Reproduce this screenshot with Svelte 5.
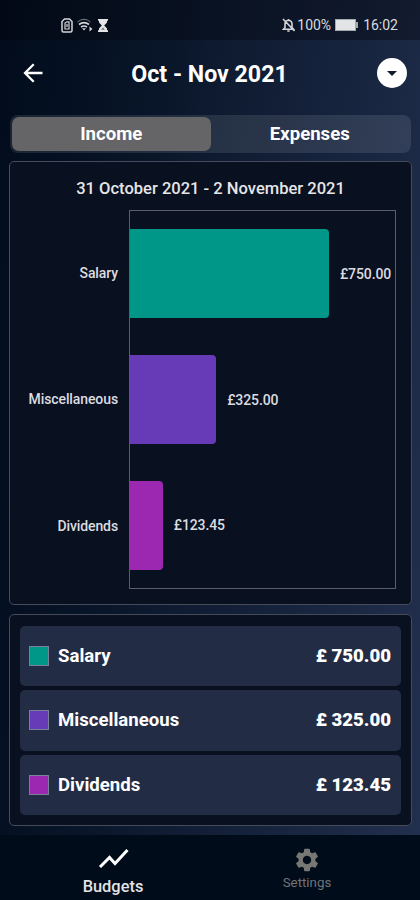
<script>
	const currency = '£';
	const scale = 0.2653;

	const items = [
		{ name: 'Salary', amount: 750, color: '#009688' },
		{ name: 'Miscellaneous', amount: 325, color: '#673ab7' },
		{ name: 'Dividends', amount: 123.45, color: '#9c27b0' }
	];

	const tabs = ['Income', 'Expenses'];
	let active = 'Income';
</script>

<div class="app">
	<div class="status">
		<div class="left">
			<svg width="12" height="15" viewBox="0 0 12 15" fill="none" stroke="#d2d4d8" stroke-width="1.5">
				<path d="M3.5 1h5L11 3.500V12.500Q11 14 9.500 14H2.500Q1 14 1 12.500V3.500Z" />
				<path d="M4 11V5l2-1.200h2V11ZM6 6v3" stroke-width="1.200" />
			</svg>
			<svg class="wifi" width="16" height="14" viewBox="0 0 16 14" fill="none" stroke="#d2d4d8">
				<path d="M.5 4Q7 -1.500 13.500 4" stroke="#777d86" />
				<path d="M2 6.500Q7 2.800 12 6.500M4 9Q7 7 10 9" stroke-width="1.600" />
				<path d="M5 10.200h4L7 12.500z" fill="#d2d4d8" stroke="none" />
				<path d="M12.500 8.500l3 2.500-3 2.500z" fill="#d2d4d8" stroke="none" />
			</svg>
			<svg width="12" height="15" viewBox="0 0 12 15" fill="#e4e5e7">
				<path d="M1 1h10v1.800H10V4.500L7.200 7.500 10 10.500v1.700h1V14H1v-1.800h1v-1.700L4.800 7.500 2 4.500V2.800H1z" />
				<path d="M6 9.500l2 2.200H4z" fill="#69707a" />
			</svg>
		</div>
		<div class="right">
			<svg width="13" height="14" viewBox="0 0 13 14" fill="none" stroke="#d2d4d8" stroke-width="1.600">
				<path d="M1.500 11.200h10L10 9.500V6q0-3.200-3.500-3.700Q3 2.800 3 6v3.500zM6.500 1v1.300M5.300 13h2.400M1 1l11.500 12" />
			</svg>
			<span>100%</span>
			<div class="battery"></div>
			<span>16:02</span>
		</div>
	</div>

	<header>
		<svg width="20" height="20" viewBox="0 0 20 20" fill="none" stroke="#fff" stroke-width="2.300">
			<path d="M19.500 10H2M10.700 1.200L2 10l8.700 8.800" />
		</svg>
		<h1>Oct - Nov 2021</h1>
		<button class="picker" aria-label="Select period">
			<svg width="10" height="5" viewBox="0 0 10 5"><path d="M0 0h10L5 5z" fill="#111b2c" /></svg>
		</button>
	</header>

	<div class="tabs">
		{#each tabs as tab}
			<button class:active={active === tab} on:click={() => (active = tab)}>{tab}</button>
		{/each}
	</div>

	<section class="panel chart">
		<h2>31 October 2021 - 2 November 2021</h2>
		<div class="graph">
			<div class="labels">
				{#each items as item}
					<span>{item.name}</span>
				{/each}
			</div>
			<div class="plot">
				{#each items as item}
					<div class="row">
						<div class="bar" style="width: {item.amount * scale}px; background: {item.color}"></div>
						<span>{currency}{item.amount.toFixed(2)}</span>
					</div>
				{/each}
			</div>
		</div>
	</section>

	<section class="panel list">
		{#each items as item}
			<div class="item">
				<i style="background: {item.color}"></i>
				<span>{item.name}</span>
				<b>{currency} {item.amount.toFixed(2)}</b>
			</div>
		{/each}
	</section>

	<nav>
		<div class="link selected">
			<svg width="32" height="24" viewBox="0 0 32 24" fill="none" stroke="#fff" stroke-width="3">
				<path d="M3 21L12.500 11.500 18 17.500 30.500 4" />
			</svg>
			<span>Budgets</span>
		</div>
		<div class="link">
			<svg width="28" height="28" viewBox="0 0 24 24" fill="#777873">
				<path d="M19.140 12.940c.04-.3.06-.61.06-.94 0-.32-.02-.64-.07-.94l2.030-1.580c.18-.14.23-.41.120-.61l-1.920-3.320c-.12-.22-.37-.29-.59-.22l-2.390.96c-.5-.38-1.030-.7-1.620-.94l-.36-2.540c-.04-.24-.24-.41-.48-.41h-3.840c-.24 0-.43.170-.47.410l-.36 2.540c-.59.24-1.130.57-1.620.94l-2.390-.96c-.22-.08-.47 0-.59.220L2.740 8.870c-.12.210-.08.470.12.610l2.030 1.580c-.05.3-.09.630-.09.940s.02.640.07.940l-2.030 1.580c-.18.140-.23.410-.12.610l1.920 3.320c.12.220.37.290.59.220l2.390-.96c.5.380 1.030.7 1.620.94l.36 2.540c.05.240.24.410.48.410h3.840c.24 0 .44-.17.470-.41l.36-2.540c.59-.24 1.130-.56 1.620-.94l2.390.96c.22.080.47 0 .59-.22l1.920-3.320c.12-.22.070-.47-.12-.61l-2.010-1.580zM12 15.600c-1.980 0-3.600-1.620-3.600-3.600s1.620-3.600 3.600-3.600 3.600 1.620 3.600 3.600-1.620 3.600-3.600 3.600z" />
			</svg>
			<span>Settings</span>
		</div>
	</nav>
</div>

<style>
	:global(body) {
		margin: 0;
	}

	* {
		box-sizing: border-box;
	}

	.app {
		height: 900px;
		display: flex;
		flex-direction: column;
		overflow: hidden;
		font-family: Roboto, sans-serif;
		color: #fff;
		background: linear-gradient(96deg, #010b1b 0%, #081528 30%, #17243e 70%, #22304f 100%);
	}

	.status {
		height: 40px;
		flex: none;
		padding: 10px 22px 0 61px;
		display: flex;
		justify-content: space-between;
		align-items: flex-start;
		background: rgba(4, 8, 16, 0.4);
		font-size: 14px;
		line-height: 30px;
		color: #d9dbdf;
	}

	.left,
	.right {
		height: 30px;
		display: flex;
		align-items: center;
	}

	.left {
		gap: 4px;
	}

	.battery {
		position: relative;
		width: 21px;
		height: 12px;
		margin: 0 7px 0 4px;
		background: #e3e4e6;
		border: 1px solid #a4a8af;
	}

	.battery::after {
		content: '';
		position: absolute;
		left: 20px;
		top: 2px;
		width: 2px;
		height: 6px;
		background: #a4a8af;
	}

	.right svg {
		margin-right: 2px;
	}

	header {
		height: 75px;
		flex: none;
		padding: 0 13px 9px 23px;
		display: flex;
		align-items: center;
		justify-content: space-between;
	}

	h1 {
		margin: 2px 1px 0 0;
		font-size: 23.200px;
		font-weight: 700;
	}

	button {
		border: 0;
		padding: 0;
		font: inherit;
		color: inherit;
		background: none;
	}

	.picker {
		width: 30px;
		height: 30px;
		border-radius: 50%;
		background: #fff;
		display: flex;
		align-items: center;
		justify-content: center;
	}

	.tabs {
		height: 38px;
		flex: none;
		margin: 0 9px 8px 10px;
		padding: 2px;
		display: flex;
		border-radius: 8px;
		background: rgba(255, 255, 255, 0.1);
	}

	.tabs button {
		flex: 1;
		padding-bottom: 1px;
		border-radius: 7px;
		font-size: 18.600px;
		font-weight: 700;
	}

	.tabs .active {
		background: #656466;
	}

	.panel {
		flex: none;
		margin: 0 8px 9px 9px;
		border: 1.500px solid #454b5b;
		border-radius: 5px;
		background: #09101f;
	}

	.chart {
		height: 444px;
		padding: 0 15px;
	}

	h2 {
		margin: 0;
		height: 48px;
		font-size: 16.550px;
		font-weight: 500;
		line-height: 53px;
		text-align: center;
		color: #e6e6e8;
	}

	.graph {
		height: 379px;
		display: flex;
		font-size: 14px;
		font-weight: 500;
		letter-spacing: -0.1px;
		color: #dcdce0;
	}

	.labels {
		width: 104px;
		padding-right: 11px;
		display: flex;
		flex-direction: column;
		text-align: right;
	}

	.labels span {
		flex: 1;
		display: flex;
		align-items: center;
		justify-content: flex-end;
	}

	.plot {
		flex: 1;
		display: flex;
		flex-direction: column;
		border: 1px solid #5a5e68;
	}

	.row {
		flex: 1;
		display: flex;
		align-items: center;
		gap: 11px;
	}

	.bar {
		height: 89px;
		flex: none;
		border-radius: 0 4px 4px 0;
	}

	.list {
		height: 212px;
		padding: 11px 10px 10px;
		display: flex;
		flex-direction: column;
		gap: 4px;
	}

	.item {
		flex: 1;
		padding: 0 10px 0 9px;
		display: flex;
		align-items: center;
		border-radius: 5px;
		background: #222d45;
		font-size: 18.600px;
		font-weight: 700;
	}

	.item i {
		width: 20px;
		height: 20px;
		margin-right: 9px;
		border: 1px solid #78809a;
	}

	.item b {
		margin-left: auto;
	}

	nav {
		flex: 1;
		padding: 0 16px;
		display: flex;
		background: #010c1a;
	}

	.link {
		flex: 1;
		padding-top: 11px;
		display: flex;
		flex-direction: column;
		align-items: center;
		font-size: 13.300px;
		line-height: 18px;
		color: #70747a;
	}

	.selected {
		font-size: 16.400px;
		font-weight: 500;
		line-height: 34px;
		color: #e2e3e5;
	}
</style>
